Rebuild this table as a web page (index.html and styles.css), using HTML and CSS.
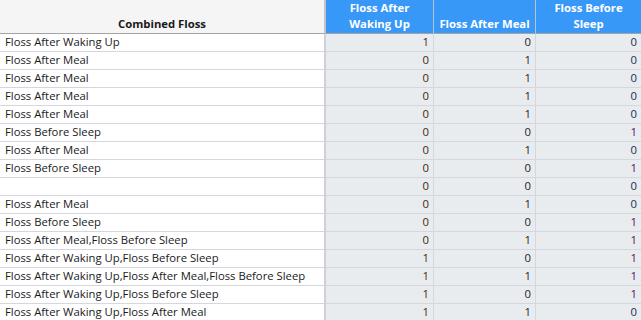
FILE: index.html
```html
<!DOCTYPE html>
<html>
<head>
<meta charset="utf-8">
<link rel="stylesheet" href="styles.css">
</head>
<body>
<table class="grid">
  <colgroup>
    <col class="c1"><col class="c2"><col class="c3"><col class="c4">
  </colgroup>
  <thead>
    <tr>
      <th class="h-name">Combined Floss</th>
      <th class="h-sel">Floss After<br>Waking Up</th>
      <th class="h-sel">Floss After Meal</th>
      <th class="h-sel h-last">Floss Before<br>Sleep</th>
    </tr>
  </thead>
  <tbody>
    <tr><td class="txt">Floss After Waking Up</td><td class="n a">1</td><td class="n b">0</td><td class="n c z">0</td></tr>
    <tr><td class="txt">Floss After Meal</td><td class="n a">0</td><td class="n b">1</td><td class="n c z">0</td></tr>
    <tr><td class="txt">Floss After Meal</td><td class="n a">0</td><td class="n b">1</td><td class="n c z">0</td></tr>
    <tr><td class="txt">Floss After Meal</td><td class="n a">0</td><td class="n b">1</td><td class="n c z">0</td></tr>
    <tr><td class="txt">Floss After Meal</td><td class="n a">0</td><td class="n b">1</td><td class="n c z">0</td></tr>
    <tr><td class="txt">Floss Before Sleep</td><td class="n a">0</td><td class="n b">0</td><td class="n c o">1</td></tr>
    <tr><td class="txt">Floss After Meal</td><td class="n a">0</td><td class="n b">1</td><td class="n c z">0</td></tr>
    <tr><td class="txt">Floss Before Sleep</td><td class="n a">0</td><td class="n b">0</td><td class="n c o">1</td></tr>
    <tr><td class="txt"></td><td class="n a">0</td><td class="n b">0</td><td class="n c z">0</td></tr>
    <tr><td class="txt">Floss After Meal</td><td class="n a">0</td><td class="n b">1</td><td class="n c z">0</td></tr>
    <tr><td class="txt">Floss Before Sleep</td><td class="n a">0</td><td class="n b">0</td><td class="n c o">1</td></tr>
    <tr><td class="txt">Floss After Meal,Floss Before Sleep</td><td class="n a">0</td><td class="n b">1</td><td class="n c o">1</td></tr>
    <tr><td class="txt">Floss After Waking Up,Floss Before Sleep</td><td class="n a">1</td><td class="n b">0</td><td class="n c o">1</td></tr>
    <tr><td class="txt">Floss After Waking Up,Floss After Meal,Floss Before Sleep</td><td class="n a">1</td><td class="n b">1</td><td class="n c o">1</td></tr>
    <tr><td class="txt">Floss After Waking Up,Floss Before Sleep</td><td class="n a">1</td><td class="n b">0</td><td class="n c o">1</td></tr>
    <tr><td class="txt">Floss After Waking Up,Floss After Meal</td><td class="n a">1</td><td class="n b">1</td><td class="n c z">0</td></tr>
  </tbody>
</table>
</body>
</html>
```

FILE: styles.css
```css
html, body {
  margin: 0;
  padding: 0;
  background: #ffffff;
  overflow: hidden;
}

.grid {
  border-collapse: separate;
  border-spacing: 0;
  table-layout: fixed;
  width: 641px;
  font-family: "Open Sans", "Noto Sans", sans-serif;
  font-size: 11.3px;
  color: #1a1a1a;
}

.c1 { width: 326px; }
.c2 { width: 108px; }
.c3 { width: 102px; }
.c4 { width: 105px; }

.grid th {
  height: 32px;
  padding: 0 2px 1px;
  font-weight: bold;
  text-align: center;
  vertical-align: bottom;
  line-height: 16px;
  border-bottom: 1px solid #a4a4a4;
  box-sizing: border-box;
}

.h-name {
  background: #f5f5f5;
  color: #1a1a1a;
  border-right: 2px solid #c4c4c4;
}

.h-sel {
  background: #3898f8;
  color: #ffffff;
  border-right: 1px solid #b4c4d4;
}

.h-last {
  border-right: none;
}

.grid td {
  height: 18px;
  padding: 0 0 1px;
  line-height: 16px;
  border-bottom: 1px solid #d6d6de;
  box-sizing: border-box;
  white-space: nowrap;
  overflow: hidden;
}

.txt {
  background: #ffffff;
  padding-left: 5px !important;
  border-right: 2px solid #d0d0d8;
}

.n {
  background: #e9ecef;
  text-align: right;
  padding-right: 4px !important;
  border-right: 1px solid #d6d6de;
}

.c { border-right: none; }

.a { color: #3b2a14; }
.b { color: #1e1e1e; }
.z { color: #14305a; }
.o { color: #5c0a5c; }
```
